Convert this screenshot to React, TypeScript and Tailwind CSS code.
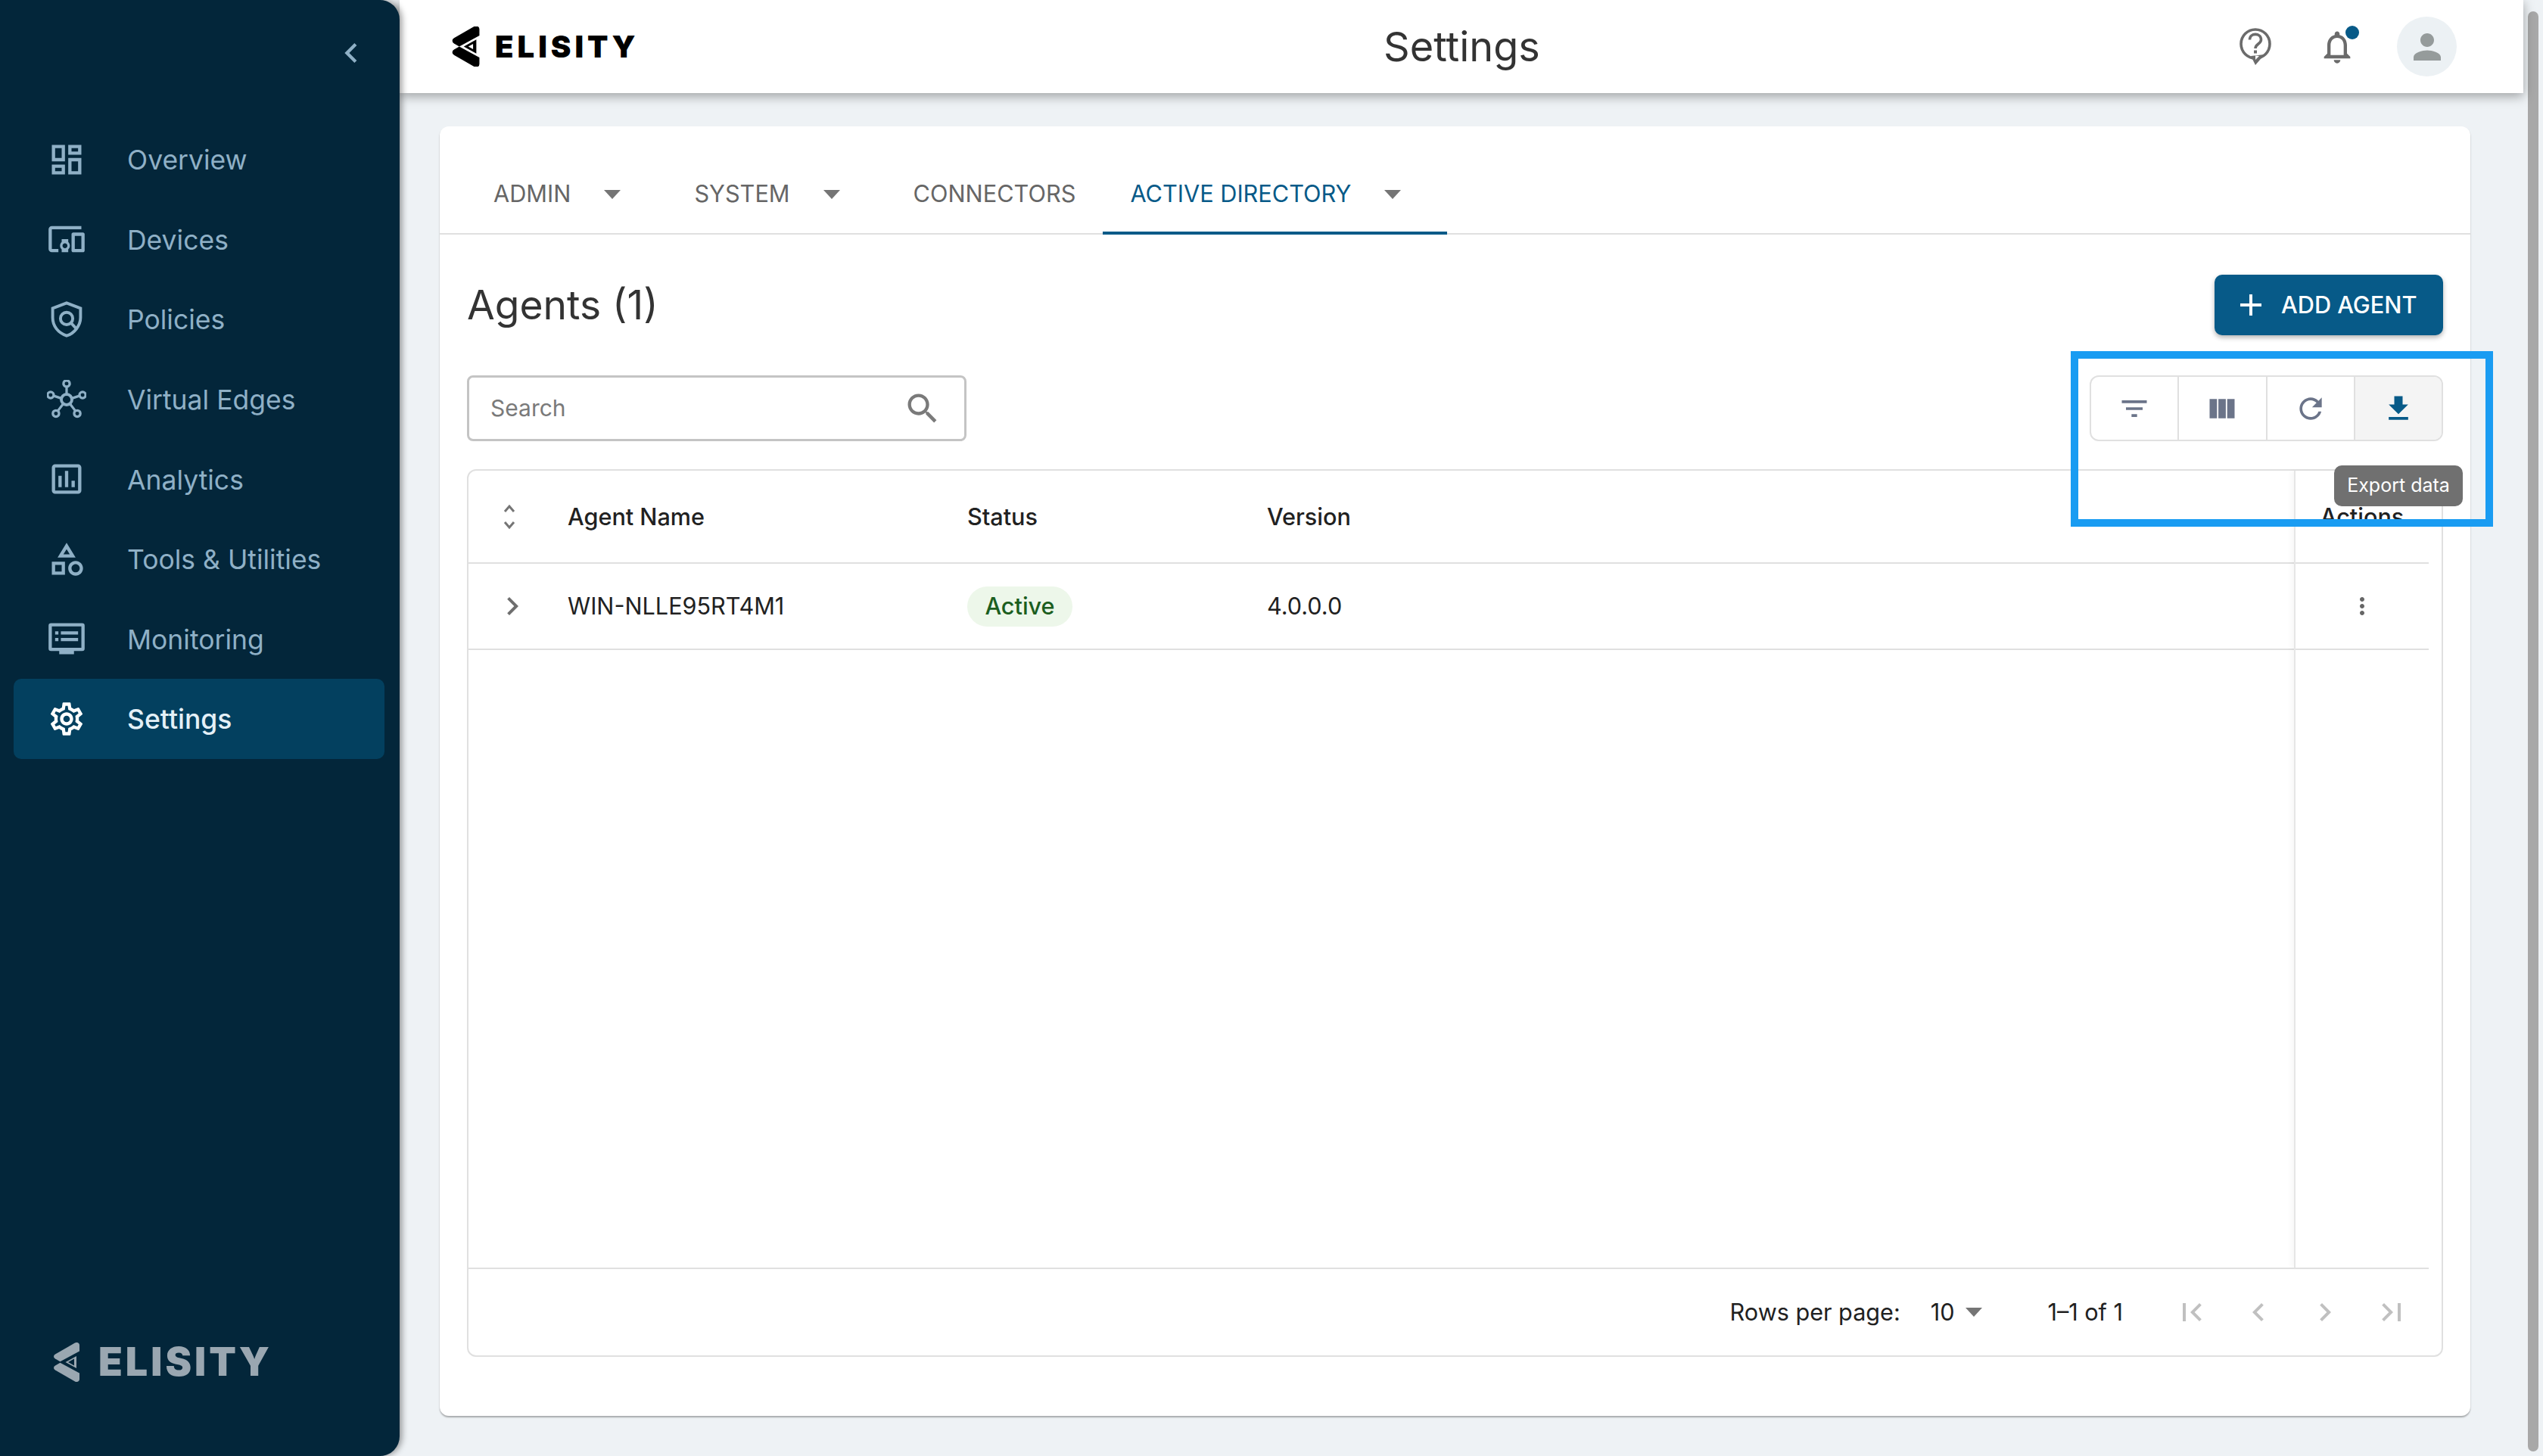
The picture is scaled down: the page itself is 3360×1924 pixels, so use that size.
import React from "react";

const P = ({ d, size = 52, className = "" }: { d: string; size?: number; className?: string }) => (
  <svg width={size} height={size} viewBox="0 0 24 24" fill="currentColor" className={"shrink-0 " + className}>
    <path d={d} />
  </svg>
);

const icons = {
  overview: "M19 5v2h-4V5h4M9 5v6H5V5h4m10 8v6h-4v-6h4M9 17v2H5v-2h4M21 3h-8v6h8V3zM11 3H3v10h8V3zm10 8h-8v10h8V11zm-10 4H3v6h8v-6z",
  devices: "M3 6h18V4H3c-1.1 0-2 .9-2 2v12c0 1.1.9 2 2 2h4v-2H3V6zm10 6H9v1.78c-.61.55-1 1.33-1 2.22s.39 1.67 1 2.22V20h4v-1.78c.61-.55 1-1.34 1-2.22s-.39-1.67-1-2.22V12zm-2 5.5c-.83 0-1.5-.67-1.5-1.5s.67-1.5 1.5-1.5 1.5.67 1.5 1.5-.67 1.5-1.5 1.5zM22 8h-6c-.5 0-1 .5-1 1v10c0 .5.5 1 1 1h6c.5 0 1-.5 1-1V9c0-.5-.5-1-1-1zm-1 10h-4v-8h4v8z",
  analytics: "M19 3H5c-1.1 0-2 .9-2 2v14c0 1.1.9 2 2 2h14c1.1 0 2-.9 2-2V5c0-1.1-.9-2-2-2zm0 16H5V5h14v14zM7 10h2v7H7zm4-3h2v10h-2zm4 6h2v4h-2z",
  tools: "M12 2l-5.5 9h11L12 2zm0 3.84L13.93 9h-3.87L12 5.84zM17.5 13c-2.49 0-4.5 2.01-4.5 4.5s2.01 4.5 4.5 4.5 4.5-2.01 4.5-4.5-2.01-4.5-4.5-4.5zm0 7c-1.38 0-2.5-1.12-2.5-2.5s1.12-2.5 2.5-2.5 2.5 1.12 2.5 2.5-1.12 2.5-2.5 2.5zM3 21.5h8v-8H3v8zm2-6h4v4H5v-4z",
  settings: "M19.43 12.98c.04-.32.07-.64.07-.98 0-.34-.03-.66-.07-.98l2.11-1.65c.19-.15.24-.42.12-.64l-2-3.46c-.09-.16-.26-.25-.44-.25-.06 0-.12.01-.17.03l-2.49 1c-.52-.4-1.08-.73-1.69-.98l-.38-2.65C14.46 2.18 14.25 2 14 2h-4c-.25 0-.46.18-.49.42l-.38 2.65c-.61.25-1.17.59-1.69.98l-2.49-1c-.06-.02-.12-.03-.18-.03-.17 0-.34.09-.43.25l-2 3.46c-.13.22-.07.49.12.64l2.11 1.65c-.04.32-.07.65-.07.98 0 .33.03.66.07.98l-2.11 1.65c-.19.15-.24.42-.12.64l2 3.46c.09.16.26.25.44.25.06 0 .12-.01.17-.03l2.49-1c.52.4 1.08.73 1.69.98l.38 2.65c.03.24.24.42.49.42h4c.25 0 .46-.18.49-.42l.38-2.65c.61-.25 1.17-.59 1.69-.98l2.49 1c.06.02.12.03.18.03.17 0 .34-.09.43-.25l2-3.46c.12-.22.07-.49-.12-.64l-2.11-1.65zm-1.98-1.71c.04.31.05.52.05.73 0 .21-.02.43-.05.73l-.14 1.13.89.7 1.08.84-.7 1.21-1.27-.51-1.04-.42-.9.68c-.43.32-.84.56-1.25.73l-1.06.43-.16 1.13-.2 1.35h-1.4l-.19-1.35-.16-1.13-1.06-.43c-.43-.18-.83-.41-1.23-.71l-.91-.7-1.06.43-1.27.51-.7-1.21 1.08-.84.89-.7-.14-1.13c-.03-.31-.05-.54-.05-.74s.02-.43.05-.73l.14-1.13-.89-.7-1.08-.84.7-1.21 1.27.51 1.04.42.9-.68c.43-.32.84-.56 1.25-.73l1.06-.43.16-1.13.2-1.35h1.39l.19 1.35.16 1.13 1.06.43c.43.18.83.41 1.23.71l.91.7 1.06-.43 1.27-.51.7 1.21-1.07.85-.89.7.14 1.13zM12 8c-2.21 0-4 1.79-4 4s1.79 4 4 4 4-1.79 4-4-1.79-4-4-4zm0 6c-1.1 0-2-.9-2-2s.9-2 2-2 2 .9 2 2-.9 2-2 2z",
  filter: "M10 18h4v-2h-4v2zM3 6v2h18V6H3zm3 7h12v-2H6v2z",
  columns: "M14.67 5v14H9.33V5h5.34zm1 14H21V5h-5.33v14zm-7.34 0V5H3v14h5.33z",
  refresh: "M17.65 6.35C16.2 4.9 14.21 4 12 4c-4.42 0-7.99 3.58-7.99 8s3.57 8 7.99 8c3.73 0 6.84-2.55 7.73-6h-2.08c-.82 2.33-3.04 4-5.65 4-3.31 0-6-2.69-6-6s2.69-6 6-6c1.66 0 3.14.69 4.22 1.78L13 11h7V4l-2.35 2.35z",
  download: "M5 20h14v-2H5v2zM19 9h-4V3H9v6H5l7 7 7-7z",
  search: "M15.5 14h-.79l-.28-.27C15.41 12.59 16 11.11 16 9.5 16 5.91 13.09 3 9.5 3S3 5.91 3 9.5 5.91 16 9.5 16c1.61 0 3.09-.59 4.23-1.57l.27.28v.79l5 4.99L20.49 19l-4.99-5zm-6 0C7.01 14 5 11.99 5 9.5S7.01 5 9.5 5 14 7.01 14 9.5 11.99 14 9.5 14z",
  first: "M18.41 16.59L13.82 12l4.59-4.59L17 6l-6 6 6 6zM6 6h2v12H6z",
  last: "M5.59 7.41L10.18 12l-4.59 4.59L7 18l6-6-6-6zM16 6h2v12h-2z",
  left: "M15.41 7.41L14 6l-6 6 6 6 1.41-1.41L10.83 12z",
  right: "M10 6L8.59 7.41 13.17 12l-4.58 4.59L10 18l6-6z",
  bell: "M12 22c1.1 0 2-.9 2-2h-4c0 1.1.9 2 2 2zm6-6v-5c0-3.07-1.63-5.64-4.5-6.32V4c0-.83-.67-1.5-1.5-1.5s-1.5.67-1.5 1.5v.68C7.64 5.36 6 7.92 6 11v5l-2 2v1h16v-1l-2-2zm-2 1H8v-6c0-2.48 1.51-4.5 4-4.5s4 2.02 4 4.5v6z",
  person: "M12 12c2.21 0 4-1.79 4-4s-1.79-4-4-4-4 1.79-4 4 1.79 4 4 4zm0 2c-2.67 0-8 1.34-8 4v2h16v-2c0-2.66-5.33-4-8-4z",
  plus: "M19 13h-6v6h-2v-6H5v-2h6V5h2v6h6v2z",
  kebab: "M12 8c1.1 0 2-.9 2-2s-.9-2-2-2-2 .9-2 2 .9 2 2 2zm0 2c-1.1 0-2 .9-2 2s.9 2 2 2 2-.9 2-2-.9-2-2-2zm0 6c-1.1 0-2 .9-2 2s.9 2 2 2 2-.9 2-2-.9-2-2-2z",
};

const PolicyIcon = () => (
  <svg width="52" height="52" viewBox="0 0 48 48" fill="none" stroke="currentColor" strokeWidth="3.600" className="shrink-0">
    <path d="M24 4 L7 10.500 V22 C7 32 13.500 40.500 24 44 C29 42.500 33 39.500 36 35.500 C39.500 31 41 26.500 41 22 V10.500 Z" />
    <circle cx="24" cy="23" r="7.500" />
    <path d="M29.500 28.500 L36 35.500" />
  </svg>
);

const HubIcon = () => (
  <svg width="52" height="52" viewBox="0 0 48 48" fill="none" stroke="currentColor" strokeWidth="3" className="shrink-0">
    <circle cx="24" cy="24" r="6.500" strokeWidth="3.600" />
    <circle cx="24" cy="4.500" r="3.800" />
    <circle cx="4.500" cy="18.500" r="3.800" />
    <circle cx="43.500" cy="18.500" r="3.800" />
    <circle cx="11" cy="41" r="3.800" />
    <circle cx="37" cy="41" r="3.800" />
    <path d="M24 8.500 V17.500 M8.500 19.500 L17.500 22.500 M39.500 19.500 L30.500 22.500 M13.500 37.500 L20 29 M34.500 37.500 L28 29" />
  </svg>
);

const MonitorIcon = () => (
  <svg width="52" height="52" viewBox="0 0 48 48" fill="currentColor" className="shrink-0">
    <path fillRule="evenodd" d="M5 5h38a3 3 0 0 1 3 3v28a3 3 0 0 1-3 3H33v4H15v-4H5a3 3 0 0 1-3-3V8a3 3 0 0 1 3-3zm1 4v26h36V9H6z" />
    <path d="M10 15h4v4h-4zM17 15h21v4H17zM10 23h4v4h-4zM17 23h21v4H17z" />
  </svg>
);

const Mark = ({ className = "" }: { className?: string }) => (
  <svg viewBox="0 0 34 52" fill="currentColor" className={"shrink-0 " + className}>
    <path d="M28 .6 C31 -1 34 .5 34 3.500 V11.500 L8.500 25.200 L2 21.500 C-.6 20 -.6 17 2 15.500 Z" />
    <path d="M28 51.400 C31 53 34 51.500 34 48.500 V40.500 L8.500 26.800 L2 30.500 C-.6 32 -.6 35 2 36.500 Z" />
    <path d="M15.500 26 L30 18 V34 Z" />
    <path d="M19 26 L27 21.500 V30.500 Z" fill="var(--hole)" />
  </svg>
);

const nav: [string, React.ReactNode][] = [
  ["Overview", <P d={icons.overview} />],
  ["Devices", <P d={icons.devices} />],
  ["Policies", <PolicyIcon />],
  ["Virtual Edges", <HubIcon />],
  ["Analytics", <P d={icons.analytics} />],
  ["Tools & Utilities", <P d={icons.tools} />],
  ["Monitoring", <MonitorIcon />],
];

const Arrow = ({ className = "" }: { className?: string }) => (
  <svg width="22" height="12" viewBox="0 0 22 12" fill="#757575" className={"shrink-0 " + className}>
    <path d="M0 0h22L11 12z" />
  </svg>
);

const NavItem = ({ label, icon, active }: { label: string; icon: React.ReactNode; active?: boolean }) => (
  <div
    className={
      "flex h-[105.600px] items-center rounded-[10px] pl-[44px] text-[35.500px] " +
      (active ? "bg-[#03405f] font-medium text-[#e4f0f7]" : "text-[#8fb0c6]")
    }
  >
    <span className={active ? "text-white" : ""}>{icon}</span>
    <span className="ml-[54px] whitespace-nowrap pt-[2px]">{label}</span>
  </div>
);

const Tab = ({ label, arrow, active }: { label: string; arrow?: boolean; active?: boolean }) => (
  <div
    className={
      "flex h-full items-center border-b-4 pb-[16px] pl-[36px] text-[30.700px] font-normal " +
      (arrow ? "pr-[61px] " : "pr-[36px] ") +
      (active ? "border-[#075a88] text-[#075a88]" : "border-transparent text-[#666666]")
    }
  >
    <span className="whitespace-nowrap">{label}</span>
    {arrow && <Arrow className="ml-[44px]" />}
  </div>
);

const ToolBtn = ({ d, active }: { d: string; active?: boolean }) => (
  <div
    className={
      "flex flex-1 items-center justify-center border-l-2 border-[#e0e0e0] first:border-l-0 " +
      (active ? "bg-[#f4f4f4] text-[#075a88]" : "text-[#6b7489]")
    }
  >
    <P d={d} size={44} />
  </div>
);

export default function App() {
  return (
    <div className="relative flex h-[1924px] w-[3360px] overflow-hidden bg-[#eef2f5] font-[Inter,sans-serif] text-[#212121]">
      {/* Sidebar */}
      <aside className="relative z-20 flex w-[528px] shrink-0 flex-col rounded-r-[26px] bg-[#03263a] pl-[18px] pr-[20px] shadow-[3px_0_8px_rgba(0,0,0,0.4)]">
        <div className="flex h-[158px] justify-end pr-[18px] pt-[44px] text-[#8fb0c6]">
          <P d={icons.left} />
        </div>
        <nav className="flex flex-col">
          {nav.map(([label, icon]) => (
            <NavItem key={label} label={label} icon={icon} />
          ))}
          <NavItem label="Settings" icon={<P d={icons.settings} />} active />
        </nav>
        <div className="mt-auto flex items-center pb-[98px] pl-[53px] text-[#9aa7b1] [--hole:#03263a]">
          <Mark className="h-[52px] w-[34px]" />
          <span className="ml-[25px] text-[52px] font-black leading-none tracking-[4px]">ELISITY</span>
        </div>
      </aside>

      {/* Main */}
      <div className="flex min-w-0 flex-1 flex-col">
        <header className="relative z-10 flex h-[123px] shrink-0 items-center bg-white pl-[69px] shadow-[0_4px_14px_rgba(0,0,0,0.35)]">
          <div className="flex items-center text-black [--hole:#ffffff]">
            <Mark className="h-[53px] w-[37px] stroke-black stroke-[1.2px]" />
            <span className="ml-[20px] text-[40px] font-black leading-none tracking-[5px]">ELISITY</span>
          </div>
          <h1 className="absolute left-[1300px] top-0 flex h-[123px] items-center text-[54px] font-normal text-[#333333]">
            Settings
          </h1>
          <div className="ml-auto flex items-center text-[#6b6b6b]">
            <svg width="48" height="56" viewBox="0 0 48 56" fill="none" className="shrink-0">
              <circle cx="24" cy="24" r="19" stroke="currentColor" strokeWidth="3.600" />
              <path d="M18 40 L24 52 L36 38 Z" fill="currentColor" />
              <path d="M24 39.500 L24 45 L29 40 Z" fill="#ffffff" />
              <path d="M16.500 18.500 C16.500 9 31.500 9 31.500 18.500 C31.500 24 24 24 24 30" stroke="currentColor" strokeWidth="3.600" />
              <rect x="22" y="32.500" width="4" height="4" fill="currentColor" />
            </svg>
            <div className="relative ml-[58px] h-[52px] w-[52px]">
              <P d={icons.bell} size={52} />
              <span className="absolute left-[37px] top-[-2px] h-[18px] w-[18px] rounded-full bg-[#075a88]" />
            </div>
            <div className="ml-[53px] mr-[88px] flex h-[79px] w-[79px] items-center justify-center rounded-full bg-[#ecf1f4] text-[#959b9b]">
              <P d={icons.person} size={54} />
            </div>
          </div>
        </header>

        <main className="flex flex-1 flex-col pb-[53px] pl-[53px] pr-[70px] pt-[44px]">
          <section className="flex flex-1 flex-col rounded-[12px] bg-white shadow-[0_2px_2px_rgba(0,0,0,0.3)]">
            <div className="flex h-[143px] shrink-0 items-end border-b-2 border-[#e0e0e0]">
              <div className="mb-[-2px] flex h-[87px] pl-[35px]">
                <Tab label="ADMIN" arrow />
                <Tab label="SYSTEM" arrow />
                <Tab label="CONNECTORS" />
                <Tab label="ACTIVE DIRECTORY" arrow active />
              </div>
            </div>

            <div className="flex flex-1 flex-col px-[36px] pb-[78px] pt-[53px]">
              <div className="flex h-[80px] shrink-0 items-center justify-between">
                <h2 className="text-[53.300px] font-normal text-[#333333]">Agents (1)</h2>
                <button className="flex h-[80px] w-[302px] items-center rounded-[10px] bg-[#075a88] pl-[24px] text-[30.700px] font-medium text-white shadow-[0_3px_6px_rgba(0,0,0,0.3)]">
                  <P d={icons.plus} size={48} />
                  <span className="ml-[16px] whitespace-nowrap">ADD AGENT</span>
                </button>
              </div>

              <div className="mt-[53px] flex h-[87px] shrink-0 items-center justify-between">
                <div className="flex h-[87px] w-[660px] items-center justify-between rounded-[8px] border-[3px] border-[#c4c4c4] pl-[28px] pr-[29px] text-[#7a7a7a]">
                  <span className="text-[30px]">Search</span>
                  <P d={icons.search} />
                </div>
                <div className="flex h-[87px] w-[467px] overflow-hidden rounded-[12px] border-2 border-[#e0e0e0]">
                  <ToolBtn d={icons.filter} />
                  <ToolBtn d={icons.columns} />
                  <ToolBtn d={icons.refresh} />
                  <ToolBtn d={icons.download} active />
                </div>
              </div>

              <div className="mt-[37px] flex min-h-0 flex-1 flex-col rounded-[12px] border-2 border-[#e0e0e0] text-[30.600px]">
                <div className="mr-[17px] flex min-h-0 flex-1">
                  <div className="min-w-0 flex-1">
                    <div className="flex h-[123px] items-center border-b-2 border-[#e0e0e0] font-medium">
                      <div className="w-[131px] pl-[46px] text-[#757575]">
                        <svg width="16" height="34" viewBox="0 0 16 34" fill="none" stroke="currentColor" strokeWidth="3">
                          <path d="M2 10 L8 3 L14 10 M2 24 L8 31 L14 24" />
                        </svg>
                      </div>
                      <div className="w-[528px]">Agent Name</div>
                      <div className="w-[396px]">Status</div>
                      <div>Version</div>
                    </div>
                    <div className="flex h-[114px] items-center border-b-2 border-[#e0e0e0]">
                      <div className="w-[131px] pl-[34px] text-[#6e6e6e]">
                        <P d={icons.right} size={48} />
                      </div>
                      <div className="w-[528px]">WIN-NLLE95RT4M1</div>
                      <div className="w-[396px]">
                        <span className="inline-flex h-[53px] w-[139px] items-center justify-center rounded-full bg-[#edf7ea] font-medium text-[#1b5e20]">
                          Active
                        </span>
                      </div>
                      <div>4.0.0.0</div>
                    </div>
                  </div>
                  <div className="w-[178px] shrink-0 border-l-2 border-[#e6e6e6] shadow-[-4px_0_6px_rgba(0,0,0,0.03)]">
                    <div className="flex h-[123px] items-center justify-center border-b-2 border-[#e0e0e0] font-medium">Actions</div>
                    <div className="flex h-[114px] items-center justify-center border-b-2 border-[#e0e0e0] text-[#666666]">
                      <P d={icons.kebab} size={36} />
                    </div>
                  </div>
                </div>
                <div className="mr-[17px] flex h-[116px] shrink-0 items-center justify-end border-t-2 border-[#e0e0e0] pr-[25px]">
                  <span className="whitespace-nowrap">Rows per page:</span>
                  <span className="ml-[40px]">10</span>
                  <Arrow className="ml-[15px]" />
                  <span className="ml-[86px] whitespace-nowrap">1–1 of 1</span>
                  <div className="ml-[67px] flex gap-[40px] text-[#c0c0c0]">
                    <P d={icons.first} size={48} />
                    <P d={icons.left} size={48} />
                    <P d={icons.right} size={48} />
                    <P d={icons.last} size={48} />
                  </div>
                </div>
              </div>
            </div>
          </section>
        </main>
      </div>

      {/* Scrollbar */}
      <div className="flex w-[26px] shrink-0 px-[6px] pb-[6px] pt-[15px]">
        <div className="w-full rounded-full bg-[#a8a8a8]" />
      </div>

      {/* Tooltip and annotation lying over the page */}
      <div className="absolute left-[3084px] top-[615px] z-30 flex h-[54px] w-[170px] items-center justify-center rounded-[10px] bg-[#707070] text-[25px] text-white">
        Export data
      </div>
      <div className="pointer-events-none absolute left-[2736px] top-[464px] z-30 h-[232px] w-[558px] border-[10px] border-[#199cf2]" />
    </div>
  );
}
